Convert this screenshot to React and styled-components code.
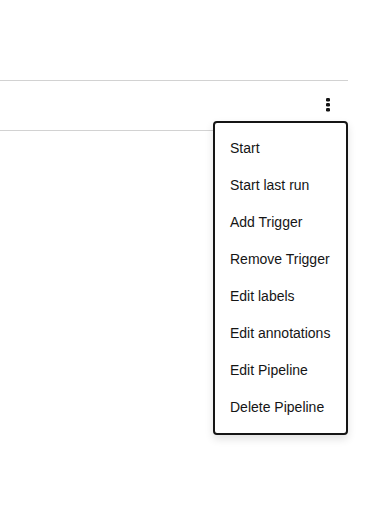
import React from 'react';
import styled, { createGlobalStyle } from 'styled-components';

const GlobalStyle = createGlobalStyle`
  html, body {
    margin: 0;
    background: #fff;
    font-family: "Liberation Sans", Arial, sans-serif;
    color: #151515;
  }
`;

const Page = styled.div`
  width: 348px;
  min-height: 528px;
  padding-top: 80px;
  box-sizing: border-box;
`;

const Row = styled.div`
  position: relative;
  height: 49px;
  border-top: 1px solid #d2d2d2;
  border-bottom: 1px solid #d2d2d2;
  display: flex;
  align-items: center;
  justify-content: flex-end;
`;

const KebabButton = styled.button`
  border: none;
  background: none;
  padding: 6px 18px 6px 16px;
  margin-bottom: 1px;
  display: flex;
  align-items: center;
  justify-content: center;
  cursor: pointer;
  color: #151515;
`;

const Menu = styled.ul`
  position: absolute;
  top: 40px;
  right: 0;
  width: 131px;
  margin: 0;
  padding: 6px 0 8px;
  list-style: none;
  background: #fff;
  border: 2px solid #151515;
  border-radius: 4px;
  box-shadow: 0 4px 8px rgba(3, 3, 3, 0.12);
  z-index: 2;
`;

const Item = styled.li`
  height: 37px;
  display: flex;
  align-items: center;
  padding: 0 15px;
  font-size: 14px;
  color: #151515;
  white-space: nowrap;
`;

const items = [
  'Start',
  'Start last run',
  'Add Trigger',
  'Remove Trigger',
  'Edit labels',
  'Edit annotations',
  'Edit Pipeline',
  'Delete Pipeline',
];

const KebabIcon = () => (
  <svg width="4" height="14" viewBox="0 0 4 14" fill="#151515">
    <rect x="0" y="0" width="4" height="3.5" rx="1.2" />
    <rect x="0" y="5" width="4" height="3.5" rx="1.2" />
    <rect x="0" y="10" width="4" height="3.5" rx="1.2" />
  </svg>
);

export default function App() {
  return (
    <>
      <GlobalStyle />
      <Page>
        <Row>
          <KebabButton aria-label="Actions">
            <KebabIcon />
          </KebabButton>
          <Menu>
            {items.map(label => (
              <Item key={label}>{label}</Item>
            ))}
          </Menu>
        </Row>
      </Page>
    </>
  );
}
